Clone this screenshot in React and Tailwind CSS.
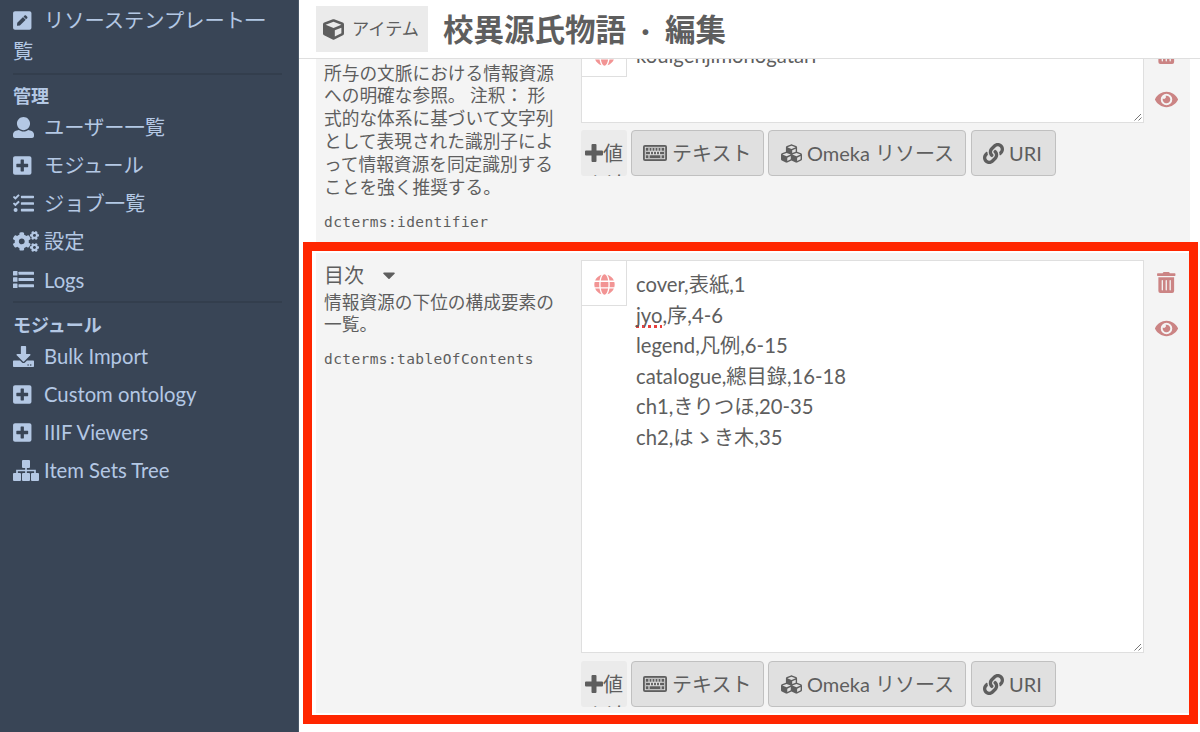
import React from 'react';
import {
    FaPenSquare, FaPlusSquare, FaTasks, FaCogs, FaDownload,
    FaCube, FaCubes, FaLink, FaGlobe, FaTrashAlt, FaEye, FaCaretDown,
} from 'react-icons/fa';

function UserIcon({ className }) {
    return (
        <svg viewBox="0 0 512 512" fill="currentColor" className={className}>
            <path d="M256 0c88.366 0 160 71.634 160 160s-71.634 160-160 160S96 248.366 96 160 167.634 0 256 0zm183.283 333.821l-71.313-17.828c-74.923 53.89-165.738 41.864-225.94 0l-71.313 17.828C29.981 344.505 0 382.903 0 426.955V464c0 26.51 21.49 48 48 48h416c26.51 0 48-21.49 48-48v-37.045c0-44.052-29.981-82.45-72.717-93.134z" />
        </svg>
    );
}

function ListIcon({ className }) {
    return (
        <svg viewBox="0 0 21 21" fill="currentColor" className={className}>
            <rect x="0" y="2" width="4.5" height="4.5" rx="0.6" />
            <rect x="0" y="8.3" width="4.5" height="4.5" rx="0.6" />
            <rect x="0" y="14.5" width="4.5" height="4.5" rx="0.6" />
            <rect x="5.5" y="2.7" width="15.5" height="3.1" rx="0.6" />
            <rect x="5.5" y="9" width="15.5" height="3.1" rx="0.6" />
            <rect x="5.5" y="15.2" width="15.5" height="3.1" rx="0.6" />
        </svg>
    );
}

function SitemapIcon({ className }) {
    return (
        <svg viewBox="0 0 26 21" fill="currentColor" className={className}>
            <rect x="9" y="0" width="8" height="8" rx="1" />
            <rect x="0" y="13" width="8" height="8" rx="1" />
            <rect x="9" y="13" width="8" height="8" rx="1" />
            <rect x="18" y="13" width="8" height="8" rx="1" />
            <path d="M4 13v-2.5h18V13M13 8v5" fill="none" stroke="currentColor" strokeWidth="1.7" />
        </svg>
    );
}

function PlusIcon({ className }) {
    return (
        <svg viewBox="0 0 18 18" fill="currentColor" className={className}>
            <path d="M7.5 0h3q1 0 1 1v5.5H17q1 0 1 1v3q0 1-1 1h-5.5V17q0 1-1 1h-3q-1 0-1-1v-5.5H1q-1 0-1-1v-3q0-1 1-1h5.5V1q0-1 1-1z" />
        </svg>
    );
}

function KeyboardIcon({ className }) {
    return (
        <svg viewBox="0 0 24 16" fill="currentColor" className={className}>
            <rect x="0" y="0" width="24" height="16" rx="2" />
            <g fill="none" stroke="#e0e0e0">
                <rect x="2.3" y="2.3" width="19.4" height="11.4" strokeWidth="0.9" />
                <path d="M3 6.3h18M3 9.7h18" strokeWidth="1.1" />
                <path d="M6 3v3.300M9 3v3.300M12 3v3.300M15 3v3.300M18 3v3.300M7.500 6.300v3.400M10.500 6.300v3.400M13.500 6.300v3.400M16.500 6.300v3.400M6 9.700v3.300M18 9.700v3.300" strokeWidth="1.100" />
            </g>
        </svg>
    );
}

const adminLinks = [
    { label: 'ユーザー一覧', icon: UserIcon },
    { label: 'モジュール', icon: FaPlusSquare, narrow: true },
    { label: 'ジョブ一覧', icon: FaTasks },
    { label: '設定', icon: FaCogs, wide: true },
    { label: 'Logs', icon: ListIcon },
];

const moduleLinks = [
    { label: 'Bulk Import', icon: FaDownload },
    { label: 'Custom ontology', icon: FaPlusSquare, narrow: true },
    { label: 'IIIF Viewers', icon: FaPlusSquare, narrow: true },
    { label: 'Item Sets Tree', icon: SitemapIcon, wide: true },
];

function iconSize(link) {
    if (link.wide) return 'h-[21px] w-[26px]';
    if (link.narrow) return 'h-[21px] w-[18.5px]';
    return 'h-[21px] w-[21px]';
}

function NavList({ links }) {
    return (
        <ul>
            {links.map((link) => (
                <li key={link.label} className="flex h-[38.2px] items-center">
                    <span className="w-[31px] shrink-0">
                        <link.icon className={iconSize(link)} />
                    </span>
                    <span className="whitespace-nowrap">{link.label}</span>
                </li>
            ))}
        </ul>
    );
}

function Sidebar() {
    return (
        <nav className="h-full w-[299px] shrink-0 border-r border-[#4a5868] bg-[#394556] pl-[13px] text-[20.25px] text-[#b4c8e4]">
            <div className="h-[73px] w-[269px] pt-[5px] leading-[30.5px]">
                <FaPenSquare className="mr-[12.5px] inline h-[21px] w-[18.5px] align-[-3px]" />
                リソーステンプレート一覧
            </div>
            <div className="h-[2px] w-[269px] bg-[#333e4d]" />
            <h4 className="mt-[8px] h-[26px] text-[18px] leading-[26px] font-bold">管理</h4>
            <div className="-mt-[1px]">
                <NavList links={adminLinks} />
            </div>
            <div className="mt-[2.5px] h-[2px] w-[269px] bg-[#333e4d]" />
            <h4 className="mt-[9px] h-[26px] text-[18px] leading-[26px] font-bold">モジュール</h4>
            <div className="-mt-[1.5px]">
                <NavList links={moduleLinks} />
            </div>
        </nav>
    );
}

function Header() {
    return (
        <header className="flex h-[59px] shrink-0 items-start border-b border-[#dfdfdf] bg-white pt-[6px] pl-[17px]">
            <div className="flex h-[46px] w-[112px] items-center bg-[#ebebeb] pl-[7px] text-[17.2px]">
                <FaCube className="mr-[8px] h-[21px] w-[21px]" />
                <span className="whitespace-nowrap">アイテム</span>
            </div>
            <h1 className="ml-[15px] flex text-[30.5px] leading-[46px] font-bold whitespace-nowrap">
                <span>校異源氏物語</span>
                <span className="w-[39px] text-center">·</span>
                <span>編集</span>
            </h1>
        </header>
    );
}

function ValueButtons() {
    const button = 'flex h-[46px] items-center rounded-[4px] border border-[#c0c0c0] bg-[#e0e0e0] whitespace-nowrap';
    return (
        <div className="flex gap-[4px] text-[20px]">
            <div className="h-[46px] w-[46px] overflow-hidden rounded-[3px] bg-[#ebebeb] pt-[8px] pl-[4px] leading-[30px]">
                <div className="flex h-[30.5px] items-start whitespace-nowrap">
                    <PlusIcon className="mt-[6px] h-[18px] w-[18px] shrink-0" />
                    値
                </div>
                <div className="pl-[2px] whitespace-nowrap">を追</div>
            </div>
            <button className={`${button} w-[133px] pl-[11px]`}>
                <KeyboardIcon className="mr-[5px] h-[16px] w-[24px]" />テキスト
            </button>
            <button className={`${button} w-[198px] pl-[12px]`}>
                <FaCubes className="mr-[5px] h-[21px] w-[21px]" />Omeka リソース
            </button>
            <button className={`${button} ml-px w-[85px] pl-[11px]`}>
                <FaLink className="mr-[5px] h-[21px] w-[21px]" />URI
            </button>
        </div>
    );
}

function ValueBox({ lines, className }) {
    return (
        <div className={`relative flex w-[563px] items-start border border-[#dfdfdf] bg-white ${className}`}>
            <div className="flex h-[45px] w-[45px] shrink-0 items-center justify-center border-r border-b border-[#dfdfdf] pt-[2px]">
                <FaGlobe className="h-[21px] w-[21px] text-[#f29494]" />
            </div>
            <div className="pt-[8px] pl-[9px] text-[20.25px] leading-[30.5px] whitespace-nowrap">
                {lines.map((line) => (
                    <div key={line}>
                        {line.startsWith('jyo') ? (
                            <>
                                <span className="underline decoration-[#e8403c] decoration-dotted decoration-[3px] underline-offset-[2px] [text-decoration-skip-ink:none]">jyo</span>
                                {line.slice(3)}
                            </>
                        ) : line}
                    </div>
                ))}
            </div>
            <svg className="absolute right-[1px] bottom-[1px] h-[8px] w-[8px]" viewBox="0 0 8 8" stroke="#777" fill="none">
                <path d="M0.5 7.5L7 1M4.5 7.5L7.5 4.5" />
            </svg>
        </div>
    );
}

function ValueActions() {
    return (
        <div className="flex w-[45px] shrink-0 flex-col items-center pt-[12px] text-[#cb8484]">
            <FaTrashAlt className="h-[21px] w-[18.5px]" />
            <FaEye className="mt-[25px] h-[21px] w-[23px]" />
        </div>
    );
}

export default function App() {
    return (
        <div className="flex h-[732px] w-[1200px] overflow-hidden bg-white font-['Lato','Noto_Sans_CJK_JP',sans-serif] text-[#5e5e5e]">
            <Sidebar />
            <main className="flex h-full w-[901px] flex-col">
                <Header />
                <div className="ml-[17px] flex h-[183px] w-[874px] shrink-0 items-start overflow-hidden bg-[#f4f4f4] pl-[8px]">
                    <div className="w-[257px] shrink-0 pt-[3.5px]">
                        <p className="text-[17.7px] leading-[22.9px] whitespace-nowrap">
                            所与の文脈における情報資源<br />への明確な参照。 注釈： 形<br />式的な体系に基づいて文字列<br />として表現された識別子によ<br />って情報資源を同定識別する<br />ことを強く推奨する。
                        </p>
                        <p className="mt-[11.5px] font-['DejaVu_Sans_Mono',monospace] text-[14.5px] leading-[22px] tracking-[0.4px]">dcterms:identifier</p>
                    </div>
                    <div className="shrink-0">
                        <div className="-mt-[28px]">
                            <ValueBox className="h-[92px]" lines={['kouigenjimonogatari']} />
                        </div>
                        <div className="mt-[7px]"><ValueButtons /></div>
                    </div>
                    <div className="-mt-[28px]"><ValueActions /></div>
                </div>
                <div className="ml-[4px] h-[482px] w-[895px] shrink-0 border-[9px] border-[#ff2600] pt-[2px] pl-[4px]">
                    <div className="flex h-[460px] items-start bg-[#f4f4f4] pt-[7px] pl-[8px]">
                        <div className="w-[257px] shrink-0">
                            <h4 className="flex h-[31px] items-center pb-[1px] text-[20px]">
                                目次<FaCaretDown className="ml-[15px] h-[20px] w-[20px]" />
                            </h4>
                            <p className="pt-[0.5px] text-[17.7px] leading-[22.9px] whitespace-nowrap">
                                情報資源の下位の構成要素の<br />一覧。
                            </p>
                            <p className="mt-[11px] font-['DejaVu_Sans_Mono',monospace] text-[14.5px] leading-[22px] tracking-[0.4px]">dcterms:tableOfContents</p>
                        </div>
                        <div className="shrink-0">
                            <ValueBox
                                className="h-[393px]"
                                lines={['cover,表紙,1', 'jyo,序,4-6', 'legend,凡例,6-15', 'catalogue,總目錄,16-18', 'ch1,きりつほ,20-35', 'ch2,はゝき木,35']}
                            />
                            <div className="mt-[8px]"><ValueButtons /></div>
                        </div>
                        <ValueActions />
                    </div>
                </div>
            </main>
        </div>
    );
}
